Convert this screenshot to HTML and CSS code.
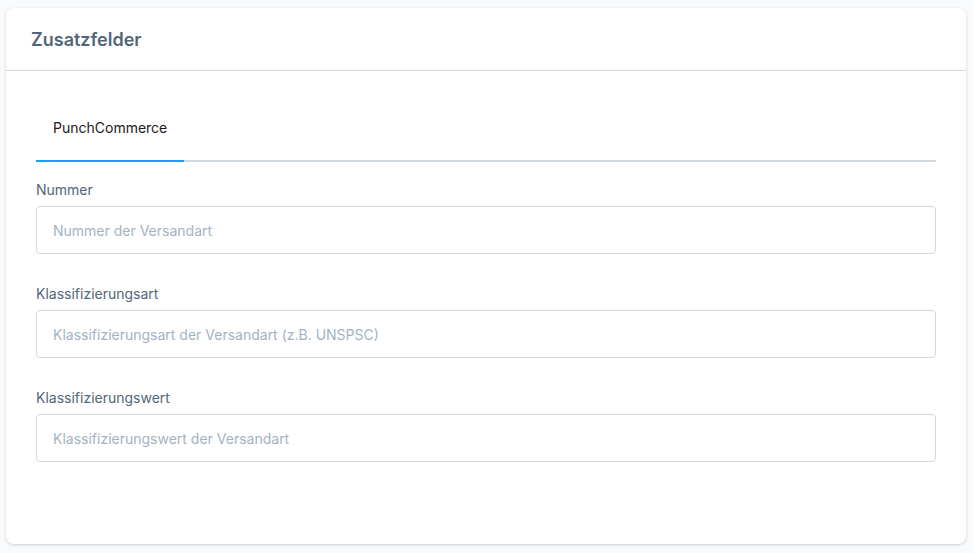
FILE: index.html
```html
<!DOCTYPE html>
<html lang="de">
    <head>
        <meta charset="UTF-8" />
        <meta name="viewport" content="width=device-width, initial-scale=1.0" />
        <title>Zusatzfelder</title>
        <link rel="stylesheet" href="styles.css">
    </head>
    <body>
        <div class="card">
            <div class="card-header">
                <h2>Zusatzfelder</h2>
            </div>
            <div class="card-body">
                <div class="tabs">
                    <div class="tab active">PunchCommerce</div>
                </div>
                <div class="field">
                    <label for="nummer">Nummer</label>
                    <input id="nummer" type="text" placeholder="Nummer der Versandart">
                </div>
                <div class="field">
                    <label for="art">Klassifizierungsart</label>
                    <input id="art" type="text" placeholder="Klassifizierungsart der Versandart (z.B. UNSPSC)">
                </div>
                <div class="field">
                    <label for="wert">Klassifizierungswert</label>
                    <input id="wert" type="text" placeholder="Klassifizierungswert der Versandart">
                </div>
            </div>
        </div>
    </body>
</html>
```

FILE: styles.css
```css
body {
    font-family: Inter, "Noto Sans", sans-serif;
    background-color: #f9fafb;
    margin: 0;
    padding: 8px 7px 9px 6px;
}
.card {
    background-color: white;
    border-radius: 8px;
    box-shadow: 0 1px 3px rgba(0, 0, 0, 0.18);
}
.card-header {
    height: 62px;
    padding: 0 25px;
    display: flex;
    align-items: center;
    border-bottom: 1px solid #d1d9e0;
}
.card-header h2 {
    margin: 0;
    font-size: 18px;
    font-weight: 600;
    color: #52667a;
}
.card-body {
    padding: 30px 30px 82px;
}
.tabs {
    display: flex;
    border-bottom: 2px solid #d1d9e0;
    margin-bottom: 18px;
}
.tab {
    font-size: 14px;
    line-height: 20px;
    color: #1a1a1a;
    padding: 17px 17px 22px;
    margin-bottom: -2px;
}
.tab.active {
    border-bottom: 2px solid #189eff;
}
.field {
    display: flex;
    flex-direction: column;
    margin-bottom: 30px;
}
.field:last-child {
    margin-bottom: 0;
}
label {
    font-size: 14px;
    line-height: 20px;
    color: #52667a;
    margin-bottom: 6px;
}
input {
    height: 48px;
    box-sizing: border-box;
    border: 1px solid #d1d9e0;
    border-radius: 4px;
    padding: 0 16px;
    font-family: inherit;
    font-size: 14px;
    color: #52667a;
}
input::placeholder {
    color: #a3b3c4;
}
```
